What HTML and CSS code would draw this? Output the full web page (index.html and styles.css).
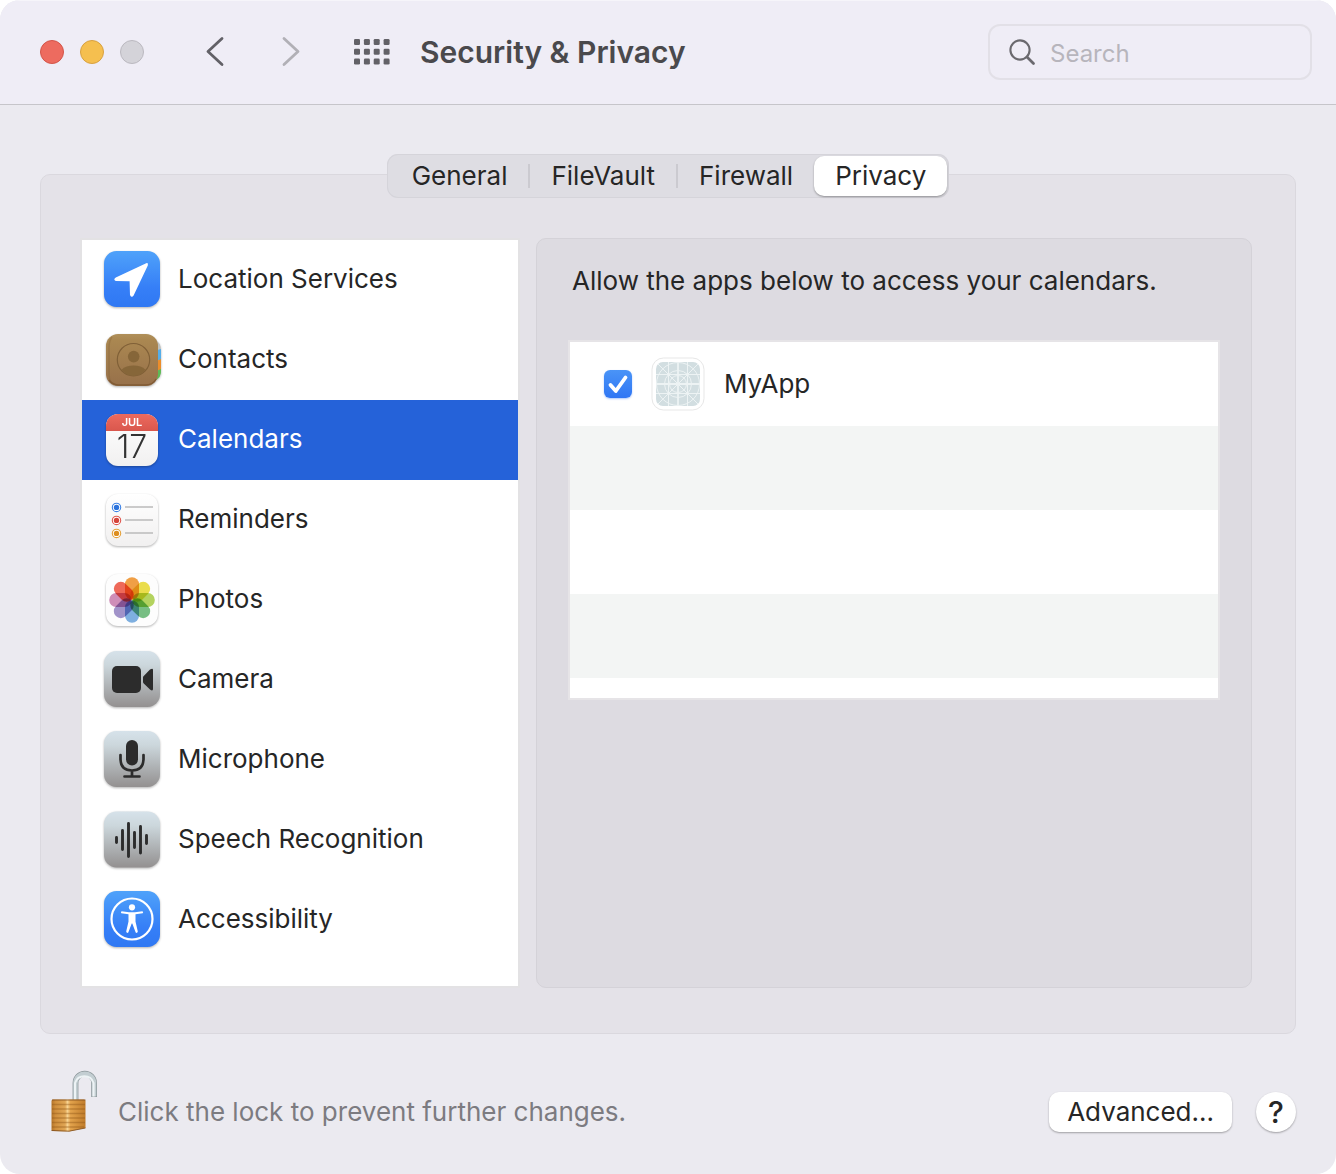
FILE: index.html
```html
<!DOCTYPE html>
<html lang="en">
<head>
<meta charset="utf-8">
<meta name="viewport" content="width=device-width, initial-scale=1">
<title>Security &amp; Privacy</title>
<link rel="stylesheet" href="styles.css">
</head>
<body>
<svg class="defs" width="0" height="0" aria-hidden="true">
  <defs>
    <linearGradient id="blue" x1="0" y1="0" x2="0" y2="1"><stop offset="0" stop-color="#4fa2fa"/><stop offset=".65" stop-color="#367ff7"/><stop offset="1" stop-color="#2f78f3"/></linearGradient>
    <linearGradient id="steel" x1="0" y1="0" x2="0" y2="1"><stop offset="0" stop-color="#d6e2ea"/><stop offset=".25" stop-color="#ccd7dc"/><stop offset="1" stop-color="#939090"/></linearGradient>
    <linearGradient id="leather" x1="0" y1="0" x2="0" y2="1"><stop offset="0" stop-color="#b0905a"/><stop offset=".12" stop-color="#aa8751"/><stop offset="1" stop-color="#97704a"/></linearGradient>
    <linearGradient id="paper" x1="0" y1="0" x2="0" y2="1"><stop offset="0" stop-color="#ffffff"/><stop offset="1" stop-color="#f1f0f0"/></linearGradient>
    <linearGradient id="red" x1="0" y1="0" x2="0" y2="1"><stop offset="0" stop-color="#ec6a5e"/><stop offset="1" stop-color="#d9574d"/></linearGradient>
    <linearGradient id="brass" x1="0" y1="0" x2="1" y2="0"><stop offset="0" stop-color="#b5752a"/><stop offset=".12" stop-color="#d08f3d"/><stop offset=".4" stop-color="#e0a655"/><stop offset=".47" stop-color="#f8d391"/><stop offset=".56" stop-color="#e3a34c"/><stop offset="1" stop-color="#c07c2b"/></linearGradient>
  </defs>
</svg>

<div class="window">
  <header class="toolbar">
    <div class="lights">
      <button class="light light-close" aria-label="Close"></button>
      <button class="light light-minimize" aria-label="Minimize"></button>
      <button class="light light-zoom" aria-label="Zoom" disabled></button>
    </div>
    <div class="history">
      <button class="tool" aria-label="Back"><svg width="20" height="32" viewBox="0 0 20 32"><path d="M17 2.500 3 15.500 17 28.500" fill="none" stroke="#626167" stroke-width="2.800" stroke-linecap="round" stroke-linejoin="round"/></svg></button>
      <button class="tool" aria-label="Forward" disabled><svg width="20" height="32" viewBox="0 0 20 32"><path d="M3 2.500 17 15.500 3 28.500" fill="none" stroke="#b1b0b6" stroke-width="2.800" stroke-linecap="round" stroke-linejoin="round"/></svg></button>
    </div>
    <button class="tool" aria-label="Show all"><svg width="36" height="26" viewBox="0 0 36 26" fill="#626167">
      <g id="dots"><rect x="0" y="0" width="6" height="6" rx="1.3"/><rect x="9.9" y="0" width="6" height="6" rx="1.3"/><rect x="19.7" y="0" width="6" height="6" rx="1.3"/><rect x="29.6" y="0" width="6" height="6" rx="1.3"/></g>
      <use href="#dots" y="9.8"/><use href="#dots" y="19.6"/>
    </svg></button>
    <h1 class="title">Security &amp; Privacy</h1>
    <label class="search">
      <svg width="28" height="28" viewBox="0 0 28 28" fill="none" stroke="#6a696e" stroke-linecap="round"><circle cx="12" cy="12" r="9.6" stroke-width="2.1"/><path d="M19 19 25.5 25.5" stroke-width="2.8"/></svg>
      <input class="search-input" type="search" placeholder="Search" aria-label="Search">
    </label>
  </header>

  <main class="content">
    <nav class="tabs" aria-label="Sections">
      <button class="tab">General</button>
      <button class="tab tab-ruled">FileVault</button>
      <button class="tab tab-ruled">Firewall</button>
      <button class="tab tab-active" aria-current="page">Privacy</button>
    </nav>

    <section class="panel">
      <ul class="categories">
        <li><button class="category">
          <svg class="icon" viewBox="0 0 56 56"><rect width="56" height="56" rx="12.5" fill="url(#blue)"/><path d="M42.2 12.2 11.8 26.4Q8.800 28.600 11.8 29.9L25.6 30.2 26 44Q27.6 47.4 29.6 44.6L43.8 14.4Q44.6 11.6 42.2 12.2Z" fill="#fff"/></svg>
          Location Services</button></li>
        <li><button class="category">
          <svg class="icon" viewBox="0 0 56 56">
            <path d="M50 8Q57 11 57 20H50Z" fill="#bfc0bd"/><path d="M50 20 57 18V29H50Z" fill="#55aee9"/><path d="M50 31 57 28V39H50Z" fill="#ec8d2a"/><path d="M50 41 57 38Q58 47 50 50Z" fill="#5dbb55"/>
            <rect x="2" y="3" width="52" height="52" rx="12" fill="url(#leather)"/>
            <path d="M8 6Q5 10 5 17V42Q5 49 8 53" fill="none" stroke="#846236" stroke-opacity=".35" stroke-width="1.5"/>
            <path d="M5 49Q9 54 15 54H41Q49 54 52 48" fill="none" stroke="#805b35" stroke-width="1.3"/>
            <circle cx="29.5" cy="28.7" r="16.2" fill="none" stroke="#806037" stroke-width="1.2"/><circle cx="29.7" cy="25.6" r="5.8" fill="#866639"/><path d="M17.5 38.7Q22 34.6 29.6 34.6T41.5 38.7Q37 44.7 29.5 44.7T17.5 38.7Z" fill="#866639"/>
          </svg>
          Contacts</button></li>
        <li><button class="category category-selected" aria-current="true">
          <svg class="icon" viewBox="0 0 56 56"><rect x="2" y="3" width="52" height="52" rx="12" fill="url(#paper)"/><path d="M2 20V15A12 12 0 0 1 14 3H42A12 12 0 0 1 54 15V20Z" fill="url(#red)"/><text class="cal-month" x="28" y="15" text-anchor="middle">JUL</text><text class="cal-day" x="28" y="47" text-anchor="middle">17</text></svg>
          Calendars</button></li>
        <li><button class="category">
          <svg class="icon" viewBox="0 0 56 56"><rect x="2" y="3" width="52" height="52" rx="12" fill="url(#paper)"/>
            <g fill="#fff" stroke-width="1.1"><circle cx="12.5" cy="16.4" r="4.2" stroke="#3d83e6"/><circle cx="12.5" cy="29.4" r="4.2" stroke="#e0574e"/><circle cx="12.5" cy="42.4" r="4.2" stroke="#e5a13b"/></g>
            <circle cx="12.5" cy="16.4" r="2.7" fill="#2c73dc"/><circle cx="12.5" cy="29.4" r="2.7" fill="#d5443b"/><circle cx="12.5" cy="42.4" r="2.7" fill="#dd8f22"/>
            <path d="M21 16H49M21 29H49M21 42H49" stroke="#bababa" stroke-width="1.7"/></svg>
          Reminders</button></li>
        <li><button class="category">
          <svg class="icon" viewBox="0 0 56 56"><rect x="2" y="3" width="52" height="52" rx="12" fill="#fdfdfd"/>
            <g class="petals" transform="translate(28 29)">
              <rect x="-7" y="-22.8" width="14" height="22.4" rx="7" fill="#f2a045"/>
              <rect x="-7" y="-22.8" width="14" height="22.4" rx="7" fill="#ecdf4c" transform="rotate(45)"/>
              <rect x="-7" y="-22.8" width="14" height="22.4" rx="7" fill="#b6d560" transform="rotate(90)"/>
              <rect x="-7" y="-22.8" width="14" height="22.4" rx="7" fill="#78c084" transform="rotate(135)"/>
              <rect x="-7" y="-22.8" width="14" height="22.4" rx="7" fill="#7fb1e2" transform="rotate(180)"/>
              <rect x="-7" y="-22.8" width="14" height="22.4" rx="7" fill="#a294cb" transform="rotate(225)"/>
              <rect x="-7" y="-22.8" width="14" height="22.4" rx="7" fill="#d18fba" transform="rotate(270)"/>
              <rect x="-7" y="-22.8" width="14" height="22.4" rx="7" fill="#f06a5a" transform="rotate(315)"/>
            </g></svg>
          Photos</button></li>
        <li><button class="category">
          <svg class="icon" viewBox="0 0 56 56"><rect width="56" height="56" rx="12.5" fill="url(#steel)"/><rect x="8" y="15" width="29" height="27" rx="5" fill="#2c2c2c"/><path d="M39.500 25.200 46 18.600Q49 16.600 49 19V38Q49 40.600 46 38.600L39.500 32.200Q39 31.600 39 31V26.400Q39 25.700 39.500 25.200Z" fill="#2c2c2c"/></svg>
          Camera</button></li>
        <li><button class="category">
          <svg class="icon" viewBox="0 0 56 56"><rect width="56" height="56" rx="12.500" fill="url(#steel)"/><rect x="22" y="9" width="12" height="25.500" rx="6" fill="#2c2c2c"/><path d="M16.500 24V28.500Q17 39.500 28 39.500T39.500 28.500V24M28 40V45.500M20.500 45.500H35.500" fill="none" stroke="#2c2c2c" stroke-width="2.700" stroke-linecap="round"/></svg>
          Microphone</button></li>
        <li><button class="category">
          <svg class="icon" viewBox="0 0 56 56"><rect y=".5" width="56" height="56" rx="12.500" fill="url(#steel)"/><path d="M12.500 26.500V31.500M18.500 19.500V38.500M24.500 12.500V45.500M30.500 21.500V36.500M36.500 15.500V42M42.500 24.500V32.500" stroke="#2c2c2c" stroke-width="2.900" stroke-linecap="round"/></svg>
          Speech Recognition</button></li>
        <li><button class="category">
          <svg class="icon" viewBox="0 0 56 56"><rect width="56" height="56" rx="12.500" fill="url(#blue)"/><circle cx="28" cy="28" r="20.500" fill="none" stroke="#fff" stroke-width="2.200"/><circle cx="28" cy="16.300" r="3.100" fill="#fff"/><path d="M17.600 20.200 25 21.300H31L38.400 20.200Q39.800 21.200 38.700 22.200L31.500 23.300V30.500L33.800 40.600Q33.300 42.600 31.700 41.600L28.300 32.500H27.700L24.300 41.600Q22.700 42.600 22.200 40.600L24.500 30.500V23.300L17.300 22.200Q16.400 21.200 17.600 20.200Z" fill="#fff"/></svg>
          Accessibility</button></li>
      </ul>

      <div class="detail">
        <p class="prompt">Allow the apps below to access your calendars.</p>
        <ul class="apps">
          <li><label class="app">
            <span class="check"><input class="check-box" type="checkbox" checked><svg class="check-mark" width="28" height="28" viewBox="0 0 28 28"><path d="M6.500 15 11.800 21 21.500 7.500" fill="none" stroke="#fff" stroke-width="3.800" stroke-linecap="round" stroke-linejoin="round"/></svg></span>
            <svg width="54" height="54" viewBox="0 0 54 54"><rect x="1" y="1" width="52" height="52" rx="11.500" fill="#fff" stroke="#e7e7e7"/><rect x="5" y="5" width="44" height="44" rx="7" fill="#d2dee1"/>
              <g fill="none" stroke="#edf3f4" stroke-width="1"><path d="M27 5V49M5 27H49" stroke-width="1.800"/><path d="M17.500 5V49M36.500 5V49M5 17.500H49M5 36.500H49M7 7 47 47M47 7 7 47"/><circle cx="27" cy="27" r="21.500"/><circle cx="27" cy="27" r="13.500"/><circle cx="27" cy="27" r="8.500"/></g></svg>
            MyApp</label></li>
        </ul>
      </div>
    </section>
  </main>

  <footer class="footer">
    <button class="lock" aria-label="Lock"><svg width="48" height="62" viewBox="0 0 48 62">
      <path d="M25.500 31V13A9.300 9.300 0 0 1 44.100 13V27" fill="none" stroke="#8b9699" stroke-width="5.800"/>
      <path d="M25.500 31V13A9.300 9.300 0 0 1 44.100 13V26.400" fill="none" stroke="#c3ced2" stroke-width="4.400"/>
      <path d="M25 31V13A9.800 9.800 0 0 1 43.600 13V26.400" fill="none" stroke="#edf3f5" stroke-width="2"/>
      <path d="M1.500 31Q1.500 29.500 3 29.500H34Q35.500 29.500 35.500 31V58L19 61.500 3 61Q1.500 61 1.500 59.500Z" fill="url(#brass)"/>
      <path d="M2 34.500H35M2 39H35M2 43.500H35M2 48H35M2 52.500H35M2 57H34" stroke="#8e5518" stroke-opacity=".42" stroke-width="1.300"/>
      <path d="M2 30H35.500M1.500 60.500 19 61.200 35.500 58" fill="none" stroke="#7d4c1c" stroke-opacity=".8"/>
    </svg></button>
    <p class="hint">Click the lock to prevent further changes.</p>
    <button class="push">Advanced...</button>
    <button class="help" aria-label="Help">?</button>
  </footer>
</div>
</body>
</html>
```
FILE: styles.css
```css
* {
  box-sizing: border-box;
}

body {
  margin: 0;
  background: #fff;
  color: #262626;
  font: 400 26px/40px Inter, "Liberation Sans", sans-serif;
}

button,
input {
  margin: 0;
  padding: 0;
  border: 0;
  background: none;
  color: inherit;
  font: inherit;
}

ul,
p,
h1 {
  margin: 0;
  padding: 0;
  list-style: none;
}

svg {
  display: block;
  flex: none;
}

.defs {
  position: absolute;
}

.window {
  display: flex;
  flex-direction: column;
  min-height: 100vh;
  border-radius: 20px;
  background: #ebeaf0;
  overflow: hidden;
}

/* Toolbar */

.toolbar {
  display: flex;
  align-items: center;
  padding: 24px 24px 24px 40px;
  border-bottom: 1px solid #c6c5ca;
  background: #efedf6;
  box-shadow: inset 0 1px #f6f5fa;
}

.lights {
  display: flex;
  gap: 16px;
}

.light {
  width: 24px;
  height: 24px;
  border: 1px solid;
  border-radius: 50%;
}

.light-close {
  border-color: #d35549;
  background: #ed6b5f;
}

.light-minimize {
  border-color: #d8a141;
  background: #f5bf4f;
}

.light-zoom {
  border-color: #bbb9c0;
  background: #d4d3d9;
}

.history {
  display: flex;
  gap: 56px;
  margin: 0 53px 0 61px;
}

.title {
  margin-left: 30px;
  color: #4a494c;
  font-size: 30px;
  font-weight: 600;
}

.search {
  display: flex;
  align-items: center;
  gap: 14px;
  width: 324px;
  height: 56px;
  margin-left: auto;
  padding: 0 18px;
  border: 2px solid #e2e0e7;
  border-radius: 12px;
}

.search-input {
  flex: 1;
  min-width: 0;
  padding-top: 3px;
  outline: 0;
  font-size: 24px;
}

.search-input::placeholder {
  color: #b7b5bc;
}

/* Tabs sit across the top edge of the panel */

.content {
  display: flex;
  flex-direction: column;
  padding: 49px 40px 0;
}

.tabs {
  display: flex;
  align-self: center;
  z-index: 1;
  margin-bottom: -24px;
  padding: 2px 2px 2px 4px;
  border-radius: 11px;
  background: #dedde3;
  box-shadow: inset 0 0 0 1px #d5d4da;
}

.tab {
  display: flex;
  align-items: center;
  height: 40px;
  padding: 0 21px;
}

.tab-ruled::before {
  content: "";
  width: 2px;
  height: 24px;
  margin: 0 21px 0 -21px;
  background: #cbcad0;
}

.tab-active {
  border-radius: 10px;
  background: #fff;
  box-shadow: 0 1px 2px rgba(0, 0, 0, 0.35);
}

.panel {
  display: flex;
  gap: 16px;
  padding: 63px 43px 45px 39px;
  border: 1px solid #dad8de;
  border-radius: 10px;
  background: #e4e2e8;
}

/* Category list */

.categories {
  flex: none;
  width: 440px;
  padding-bottom: 26px;
  border: 2px solid #e3e2e4;
  background: #fff;
  background-clip: padding-box;
}

.category {
  display: flex;
  align-items: center;
  gap: 18px;
  width: 100%;
  height: 80px;
  padding: 0 22px 2px;
  text-align: left;
}

.category-selected {
  background: #2562d9;
  color: #fff;
}

.icon {
  width: 56px;
  height: 56px;
  overflow: visible;
  filter: drop-shadow(0 1px 1px rgba(0, 0, 0, 0.3));
}

.petals rect {
  mix-blend-mode: multiply;
}

.cal-month {
  fill: #fff;
  font-size: 11px;
  font-weight: 600;
}

.cal-day {
  fill: #333;
  font-size: 32px;
  font-weight: 300;
}

/* Detail pane */

.detail {
  flex: 1;
  min-width: 0;
  padding: 22px 31px;
  border: 1px solid #d4d2d8;
  border-radius: 10px;
  background: #dddbe1;
}

.prompt {
  padding: 0 4px;
}

.apps {
  min-height: 360px;
  margin-top: 39px;
  border: 2px solid #e6e4e7;
  background: repeating-linear-gradient(#fff 0 84px, #f3f5f4 84px 168px);
}

.app {
  display: flex;
  align-items: center;
  gap: 19px;
  height: 84px;
  padding: 0 34px;
}

.check {
  display: grid;
}

.check-box,
.check-mark {
  grid-area: 1 / 1;
}

.check-box {
  width: 28px;
  height: 28px;
  border-radius: 6px;
  background: linear-gradient(#4a94f7, #2f76f4);
  box-shadow: 0 1px 2px rgba(47, 118, 244, 0.4);
  appearance: none;
}

.check-mark {
  pointer-events: none;
}

/* Footer */

.footer {
  display: flex;
  align-items: flex-end;
  padding: 36px 40px 42px 50px;
}

.hint {
  flex: 1;
  padding-left: 20px;
  color: #7c7b80;
}

.push,
.help {
  height: 40px;
  background: #fff;
  box-shadow: 0 1px 2px rgba(0, 0, 0, 0.32);
}

.push {
  padding: 0 18px;
  border-radius: 10px;
}

.help {
  width: 40px;
  margin-left: 24px;
  border-radius: 50%;
  font-size: 30px;
  font-weight: 500;
}
```
